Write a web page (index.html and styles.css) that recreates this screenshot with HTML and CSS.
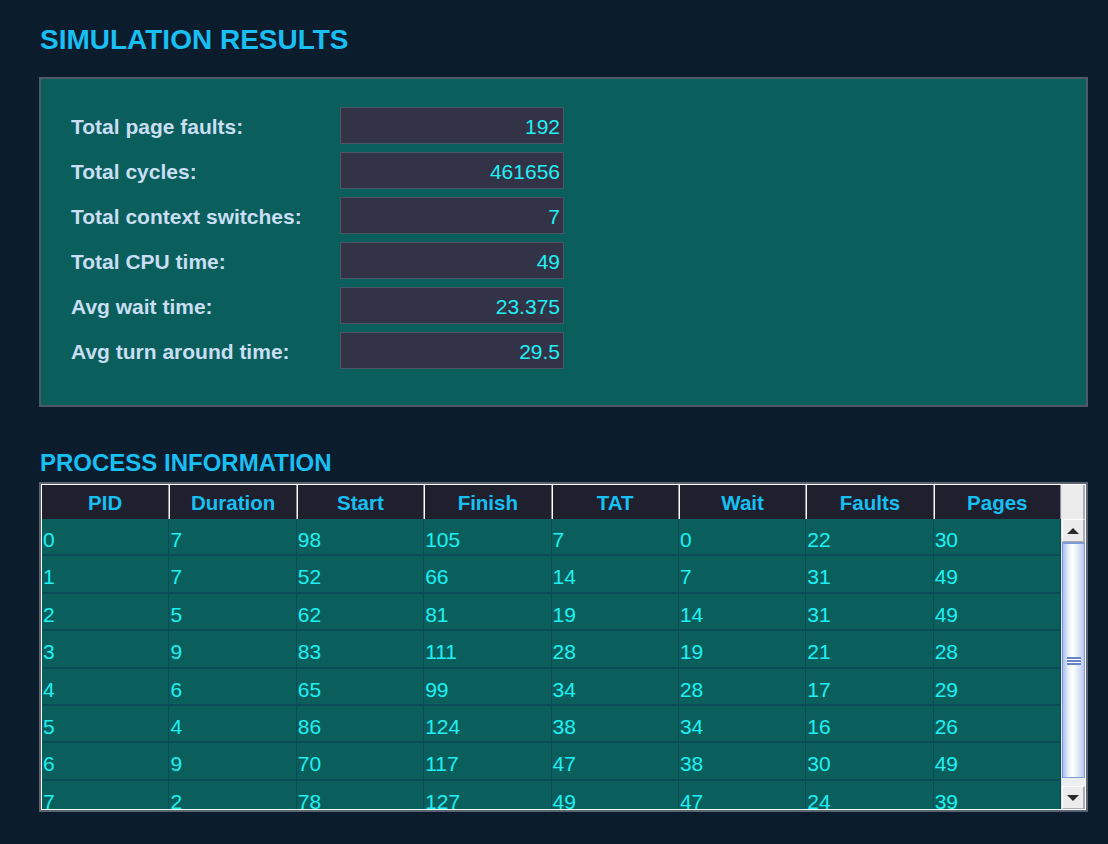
FILE: index.html
```html
<!DOCTYPE html>
<html>
<head>
<meta charset="utf-8">
<link rel="stylesheet" href="styles.css">
</head>
<body>
<div class="page">
  <h1 class="title">SIMULATION RESULTS</h1>
  <section class="panel">
    <div class="stat"><span class="label">Total page faults:</span><span class="field">192</span></div>
    <div class="stat"><span class="label">Total cycles:</span><span class="field">461656</span></div>
    <div class="stat"><span class="label">Total context switches:</span><span class="field">7</span></div>
    <div class="stat"><span class="label">Total CPU time:</span><span class="field">49</span></div>
    <div class="stat"><span class="label">Avg wait time:</span><span class="field">23.375</span></div>
    <div class="stat"><span class="label">Avg turn around time:</span><span class="field">29.5</span></div>
  </section>
  <h2 class="subtitle">PROCESS INFORMATION</h2>
  <div class="table-frame">
    <div class="table-inner">
      <div class="table-main">
        <div class="thead">
          <div class="th">PID</div><div class="th">Duration</div><div class="th">Start</div><div class="th">Finish</div>
          <div class="th">TAT</div><div class="th">Wait</div><div class="th">Faults</div><div class="th">Pages</div>
        </div>
        <div class="tbody">
          <div class="tr"><div class="td">0</div><div class="td">7</div><div class="td">98</div><div class="td">105</div><div class="td">7</div><div class="td">0</div><div class="td">22</div><div class="td">30</div></div>
          <div class="tr"><div class="td">1</div><div class="td">7</div><div class="td">52</div><div class="td">66</div><div class="td">14</div><div class="td">7</div><div class="td">31</div><div class="td">49</div></div>
          <div class="tr"><div class="td">2</div><div class="td">5</div><div class="td">62</div><div class="td">81</div><div class="td">19</div><div class="td">14</div><div class="td">31</div><div class="td">49</div></div>
          <div class="tr"><div class="td">3</div><div class="td">9</div><div class="td">83</div><div class="td">111</div><div class="td">28</div><div class="td">19</div><div class="td">21</div><div class="td">28</div></div>
          <div class="tr"><div class="td">4</div><div class="td">6</div><div class="td">65</div><div class="td">99</div><div class="td">34</div><div class="td">28</div><div class="td">17</div><div class="td">29</div></div>
          <div class="tr"><div class="td">5</div><div class="td">4</div><div class="td">86</div><div class="td">124</div><div class="td">38</div><div class="td">34</div><div class="td">16</div><div class="td">26</div></div>
          <div class="tr"><div class="td">6</div><div class="td">9</div><div class="td">70</div><div class="td">117</div><div class="td">47</div><div class="td">38</div><div class="td">30</div><div class="td">49</div></div>
          <div class="tr"><div class="td">7</div><div class="td">2</div><div class="td">78</div><div class="td">127</div><div class="td">49</div><div class="td">47</div><div class="td">24</div><div class="td">39</div></div>
        </div>
      </div>
      <div class="scrollbar">
        <div class="sb-corner"></div>
        <div class="sb-btn"><span class="tri-up"></span></div>
        <div class="sb-track"><div class="sb-thumb"><span class="grip"></span></div></div>
        <div class="sb-btn"><span class="tri-down"></span></div>
      </div>
    </div>
  </div>
</div>
</body>
</html>
```

FILE: styles.css
```css
* { box-sizing: border-box; }
html, body { margin: 0; padding: 0; }
body {
  background: #0b1c2c;
  font-family: "Liberation Sans", Arial, sans-serif;
  width: 1108px;
  height: 844px;
  overflow: hidden;
}
.page {
  padding: 24px 20px 0 39px;
}
.title {
  margin: 0 0 21px 1px;
  font-size: 28px;
  line-height: 32px;
  font-weight: bold;
  color: #19bff3;
}
.panel {
  background: #0a5f5c;
  border: 2px solid #4d5868;
  padding: 28px 0 36px 30px;
  display: flex;
  flex-direction: column;
  gap: 8px;
}
.stat {
  display: flex;
  align-items: center;
  height: 37px;
}
.label {
  width: 269px;
  font-size: 21px;
  font-weight: bold;
  color: #c9def3;
  padding-top: 3px;
}
.field {
  width: 224px;
  height: 37px;
  background: #333347;
  border: 1px solid #4c5565;
  color: #1ff0f3;
  font-size: 21px;
  text-align: right;
  padding: 2px 3px 0;
  line-height: 33px;
}
.subtitle {
  margin: 42px 0 5px 1px;
  font-size: 24px;
  line-height: 28px;
  font-weight: bold;
  color: #19bff3;
}
.table-frame {
  border: 2px solid #5c6474;
}
.table-inner {
  border: 1px solid #ffffff;
  display: flex;
  height: 326px;
}
.table-main {
  flex: 1;
  display: flex;
  flex-direction: column;
  overflow: hidden;
}
.thead {
  display: grid;
  grid-template-columns: repeat(8, 1fr);
  height: 34px;
  flex: none;
}
.th {
  background: #1f1f2e;
  border-left: 1px solid #ffffff;
  border-right: 1px solid #8a8d94;
  border-bottom: 1px solid #8a8d94;
  color: #17c0f2;
  font-weight: bold;
  font-size: 20.5px;
  text-align: center;
  line-height: 35px;
}
.th:first-child { border-left: none; }
.tbody {
  flex: 1;
  overflow: hidden;
  background: #0a5f5c;
}
.tr {
  display: grid;
  grid-template-columns: repeat(8, 1fr);
  height: 37.4px;
  border-bottom: 2px solid #0b4b58;
}
.td {
  border-right: 1px solid #0b4b58;
  color: #1ff0f3;
  font-size: 21px;
  line-height: 38px;
  padding: 2px 0 0 1px;
}
.scrollbar {
  width: 24px;
  flex: none;
  display: flex;
  flex-direction: column;
  background: #ececec;
  border-left: 1px solid #dfe3ea;
}
.sb-corner {
  height: 34px;
  flex: none;
  background: #ececec;
  border-right: 2px solid #a8acb2;
}
.sb-btn {
  height: 23px;
  flex: none;
  background: #ececec;
  border-top: 1px solid #ffffff;
  border-left: 1px solid #ffffff;
  border-right: 2px solid #a8acb2;
  border-bottom: 1px solid #a8acb2;
  display: flex;
  align-items: center;
  justify-content: center;
}
.tri-up {
  width: 0; height: 0;
  border-left: 6px solid transparent;
  border-right: 6px solid transparent;
  border-bottom: 6px solid #2a2a2a;
}
.tri-down {
  width: 0; height: 0;
  border-left: 6px solid transparent;
  border-right: 6px solid transparent;
  border-top: 6px solid #2a2a2a;
}
.sb-track {
  flex: 1;
  background: #eceef2;
  padding-bottom: 8px;
  display: flex;
}
.sb-thumb {
  flex: 1;
  border: 1px solid #7d9bd9;
  border-top: 2px solid #7d9bd9;
  background: linear-gradient(to right, #a9bfea 0%, #e6eefb 25%, #ffffff 45%, #e3ebf9 70%, #b8c9ea 100%);
  display: flex;
  align-items: center;
  justify-content: center;
}
.grip {
  width: 14px;
  height: 8px;
  background: repeating-linear-gradient(to bottom, #6484cc 0, #6484cc 2px, #ffffff 2px, #ffffff 3px);
}
```
